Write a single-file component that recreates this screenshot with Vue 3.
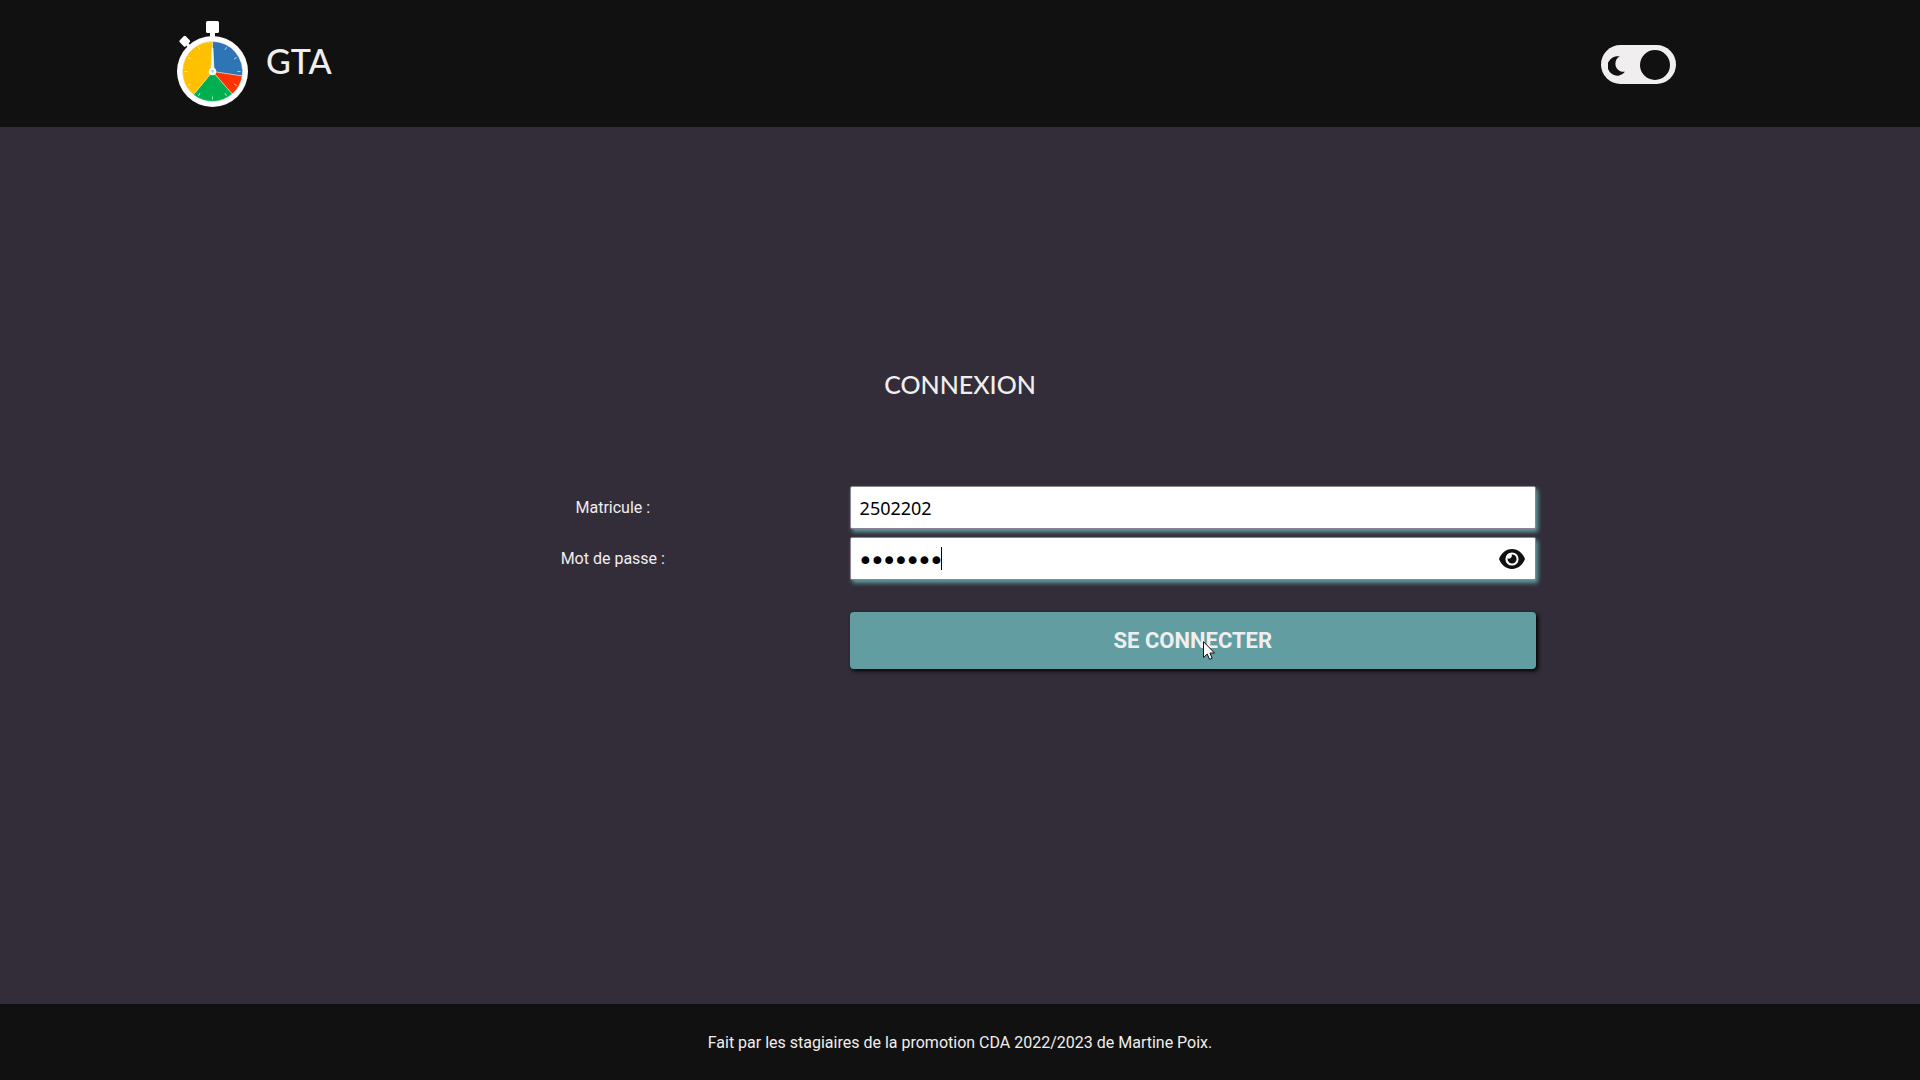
<script setup>
import { ref } from 'vue'

const matricule = ref('2502202')
const password = ref('2502202')
const visible = ref(false)
const dark = ref(true)
const ticks = [30, 60, 90, 120, 150, 180, 210, 240, 270, 300, 330]
</script>

<template>
  <div class="page">
    <header class="header">
      <a class="brand" href="#">
        <svg class="logo" viewBox="0 0 71 88" aria-hidden="true">
          <rect x="29" y="1" width="13" height="12" rx="1.5" fill="#fff" />
          <rect x="33" y="12" width="5" height="5" fill="#fff" />
          <rect x="3.500" y="17" width="8.500" height="8.500" rx="1.5" fill="#fff" transform="rotate(45 7.750 21.250)" />
          <path d="M9 23l4 4" stroke="#fff" stroke-width="3" />
          <circle cx="35.500" cy="51.500" r="35.500" fill="#fff" />
          <g stroke="#e8e4dc" stroke-width=".5">
            <path d="M35.500 51.500V21.500A30 30 0 0 1 65.200 56Z" fill="#2e75b6" />
            <path d="M35.500 51.500L65.200 56A30 30 0 0 1 55.200 74Z" fill="#ff3300" />
            <path d="M35.500 51.500L55.200 74A30 30 0 0 1 16.500 74.700Z" fill="#00b050" />
            <path d="M35.500 51.500L16.500 74.700A30 30 0 0 1 35.500 21.500Z" fill="#ffc000" />
          </g>
          <path
            v-for="angle in ticks"
            :key="angle"
            d="M35.500 26.500v-3"
            stroke="#fff"
            stroke-opacity=".8"
            stroke-width=".8"
            :transform="`rotate(${angle} 35.5 51.5)`"
          />
          <path d="M35 28h1l1 22h-3z" fill="#fff" stroke="#fff" stroke-width=".6" />
          <circle cx="35.500" cy="51.500" r="3.800" fill="#fff" />
          <path d="M34 50.300h3l-1.500 3z" fill="#a5c8a0" />
        </svg>
        <span class="brand-name">GTA</span>
      </a>
      <label class="switch">
        <input v-model="dark" type="checkbox" aria-label="Mode sombre" />
        <svg class="moon" viewBox="0 0 18 20" aria-hidden="true">
          <path d="M12 .6C5 3 5.500 16.500 17 15.800A9.700 9.700 0 1 1 12 .6Z" fill="#111" />
        </svg>
      </label>
    </header>

    <main class="main">
      <h1 class="title">CONNEXION</h1>
      <form class="form" @submit.prevent>
        <label class="label" for="matricule">Matricule :</label>
        <input id="matricule" v-model="matricule" class="field" type="text" />
        <label class="label" for="password">Mot de passe :</label>
        <div class="password">
          <input
            id="password"
            v-model="password"
            class="field secret"
            :type="visible ? 'text' : 'password'"
          />
          <span class="caret"></span>
          <button class="eye" type="button" aria-label="Afficher le mot de passe" @click="visible = !visible">
            <svg viewBox="0 0 26 20" aria-hidden="true">
              <path d="M13 0C6.500 0 2 5 .3 9.200a2 2 0 0 0 0 1.600C2 15 6.500 20 13 20s11-5 12.700-9.200a2 2 0 0 0 0-1.600C24 5 19.500 0 13 0Z" fill="#111" />
              <circle cx="13" cy="10" r="6.600" fill="#fff" />
              <path d="M13 5.500A4.500 4.500 0 1 1 8.600 9.300A3 3 0 0 0 12.700 5.500Z" fill="#111" />
            </svg>
          </button>
        </div>
        <div class="action">
          <button class="submit" type="submit">SE CONNECTER</button>
          <svg class="pointer" viewBox="0 0 12 19" aria-hidden="true">
            <path d="M.5 .7V16.500L4.200 13L6.600 18.300L9.200 17.200L6.900 12H11.500Z" fill="#fff" stroke="#111" />
          </svg>
        </div>
      </form>
    </main>

    <footer class="footer">Fait par les stagiaires de la promotion CDA 2022/2023 de Martine Poix.</footer>
  </div>
</template>

<style>
body {
  margin: 0;
  background: #332d39;
}
</style>

<style scoped>
.page {
  display: flex;
  flex-direction: column;
  min-height: 100vh;
  background: #332d39;
  color: #f0eeee;
  font: 16px/20px Roboto, sans-serif;
}
.header {
  display: flex;
  align-items: center;
  justify-content: space-between;
  box-sizing: border-box;
  min-height: 127px;
  padding: 0 244px 0 177px;
  background: #111;
}
.brand {
  display: flex;
  align-items: center;
  gap: 18px;
  color: inherit;
  text-decoration: none;
}
.logo {
  width: 71px;
  height: 88px;
}
.brand-name {
  padding-bottom: 6px;
  font: 500 34px/40px Lato, sans-serif;
}
.switch {
  position: relative;
  display: flex;
  padding-top: 2px;
}
.switch input {
  appearance: none;
  display: flex;
  align-items: center;
  box-sizing: border-box;
  width: 75px;
  height: 39px;
  margin: 0;
  padding: 0 6px;
  border-radius: 20px;
  background: #f0eeee;
}
.switch input::before {
  content: "";
  width: 30px;
  height: 30px;
  border-radius: 50%;
  background: #111;
}
.switch input:checked {
  justify-content: flex-end;
}
.moon {
  position: absolute;
  top: 13px;
  left: 7px;
  width: 18px;
  height: 20px;
}
.main {
  display: flex;
  flex: 1;
  flex-direction: column;
  align-items: center;
  justify-content: center;
  padding-bottom: 94px;
}
.title {
  margin: 0 0 86px;
  font: 500 25px/32px Lato, sans-serif;
}
.form {
  display: grid;
  grid-template-columns: 2fr 3fr;
  gap: 8px;
  width: 60%;
}
.label {
  align-self: center;
  text-align: center;
}
.field {
  box-sizing: border-box;
  width: 100%;
  height: 43px;
  padding: 0 9px;
  border: 1px solid #8a8494;
  border-radius: 2px;
  background: #fff;
  box-shadow: 2px 3px 4px #5f9ea0;
  color: #000;
  font: 18px "Noto Sans", sans-serif;
  outline: none;
}
.password,
.action {
  position: relative;
  display: flex;
}
.secret {
  padding-top: 2px;
  font: 20px "DejaVu Sans", sans-serif;
  -webkit-text-stroke: 2px #000;
}
.caret {
  position: absolute;
  top: 10px;
  left: 91px;
  width: 1px;
  height: 23px;
  background: #000;
}
.eye {
  position: absolute;
  top: 12px;
  right: 11px;
  width: 26px;
  height: 20px;
  padding: 0;
  border: 0;
  background: none;
}
.eye svg {
  display: block;
}
.action {
  grid-column: 2;
  margin-top: 24px;
}
.submit {
  width: 100%;
  height: 57px;
  padding: 0;
  border: 0;
  border-radius: 4px;
  background: #629ea1;
  box-shadow: 2px 2px 4px #000;
  color: #f0eeee;
  font: bold 22px Roboto, sans-serif;
}
.pointer {
  position: absolute;
  top: 29px;
  left: 353px;
  width: 12px;
  height: 19px;
}
.footer {
  padding: 29px 0 27px;
  background: #111;
  text-align: center;
}
</style>
